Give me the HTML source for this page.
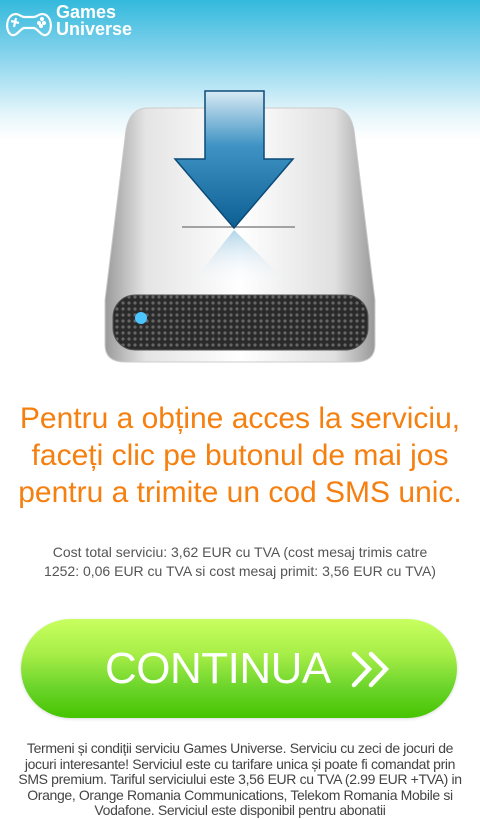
<!DOCTYPE html>
<html style="background:#fff"><head><meta charset="utf-8"><style>
*{margin:0;padding:0;box-sizing:border-box}
body{width:480px;height:800px;overflow:hidden;font-family:"Liberation Sans",sans-serif;background:linear-gradient(#33b9dc 0px,#8fd6ee 60px,#e6f6fb 115px,#fff 140px,#fff 800px) no-repeat;position:relative}
.logo{position:absolute;left:4px;top:4px;color:#fff}
.h{position:absolute;top:400px;left:0;width:480px;text-align:center;color:#f57f0f;font-size:30px;line-height:37px}
.c{position:absolute;top:543px;left:0;width:480px;text-align:center;color:#555;font-size:14px;line-height:19px}
.btn{position:absolute;left:21px;top:619px;width:436px;height:99px;border-radius:50px;background:linear-gradient(#c8ff60,#a8ee48 35%,#6ad42a 70%,#46c400);box-shadow:0 1px 3px rgba(0,0,0,.15)}
.btn span{position:absolute;left:84px;top:25px;color:#fff;font-size:44px;line-height:50px;letter-spacing:-0.5px}
.t{position:absolute;top:741px;left:0;width:480px;text-align:center;color:#444;font-size:14px;line-height:15.5px;padding:0 4px;letter-spacing:-0.35px}
</style></head><body>
<div class="logo">
<svg width="52" height="30" style="position:absolute;left:0;top:4px" fill="none" stroke="#fff" stroke-width="2.2"><path d="M8 27 C2 25 1 12 8 7 C14 4 17 9 20 9 L30 9 C33 9 36 4 42 7 C49 12 48 25 42 27 C37 28 34 21 30 20 L20 20 C16 21 13 28 8 27Z"/><path d="M7 13 L15 15 M12 10 L10 19"/><circle cx="38" cy="11" r="1" fill="#fff"/><circle cx="35" cy="15" r="1" fill="#fff"/><circle cx="40" cy="15" r="1" fill="#fff"/><circle cx="37" cy="18" r="1" fill="#fff"/></svg>
<div style="position:absolute;left:52px;top:0px;font-size:18px;line-height:17px;font-weight:bold">Games<br>Universe</div>
</div>
<svg width="480" height="380" style="position:absolute;left:0;top:0">
<defs>
<linearGradient id="bd" x1="0" x2="1"><stop offset="0" stop-color="#9a9a9a"/><stop offset=".15" stop-color="#e4e4e4"/><stop offset=".5" stop-color="#fff"/><stop offset=".85" stop-color="#e0e0e0"/><stop offset="1" stop-color="#999"/></linearGradient>
<linearGradient id="ar" x1="0" y1="0" x2="0" y2="1"><stop offset="0" stop-color="#d8eaf4"/><stop offset=".4" stop-color="#3f93c4"/><stop offset="1" stop-color="#0d5f93"/></linearGradient>
<linearGradient id="rf" x1="0" y1="0" x2="0" y2="1"><stop offset="0" stop-color="#8fc3e0"/><stop offset="1" stop-color="#fff" stop-opacity="0"/></linearGradient>
<pattern id="dots" width="6" height="6" patternUnits="userSpaceOnUse"><rect width="6" height="6" fill="#2a2a2a"/><circle cx="3" cy="3" r="1.6" fill="#666"/></pattern>
</defs>
<path d="M148 108 L332 108 Q350 108 354 130 L375 300 L375 345 Q375 362 355 362 L125 362 Q105 362 105 345 L105 300 L126 130 Q130 108 148 108Z" fill="url(#bd)" stroke="#ccc"/>
<rect x="113" y="295" width="255" height="55" rx="22" fill="url(#dots)" stroke="#555"/>
<circle cx="141" cy="318" r="6" fill="#4cc4ff"/>
<path d="M182 227 L295 227" stroke="#888" stroke-width="1.5"/>
<path d="M234 230 L190 285 L290 285Z" fill="url(#rf)" opacity=".7"/>
<path d="M205 91 L264 91 L264 159 L293 159 L234 228 L175 159 L205 159Z" fill="url(#ar)" stroke="#0b4a78" stroke-width="1.5"/>
</svg>
<div class="h">Pentru a obține acces la serviciu,<br>faceți clic pe butonul de mai jos<br>pentru a trimite un cod SMS unic.</div>
<div class="c">Cost total serviciu: 3,62 EUR cu TVA (cost mesaj trimis catre<br>1252: 0,06 EUR cu TVA si cost mesaj primit: 3,56 EUR cu TVA)</div>
<div class="btn"><span>CONTINUA</span>
<svg width="40" height="40" style="position:absolute;left:330px;top:32px" fill="none" stroke="#fff" stroke-width="4.5" stroke-linecap="round"><path d="M3 3 L18 18 L3 34"/><path d="M20 3 L35 18 L20 34"/></svg></div>
<div class="t">Termeni și condiții serviciu Games Universe. Serviciu cu zeci de jocuri de<br>jocuri interesante! Serviciul este cu tarifare unica și poate fi comandat prin<br>SMS premium. Tariful serviciului este 3,56 EUR cu TVA (2.99 EUR +TVA) in<br>Orange, Orange Romania Communications, Telekom Romania Mobile si<br>Vodafone. Serviciul este disponibil pentru abonatii</div>
</body></html>
